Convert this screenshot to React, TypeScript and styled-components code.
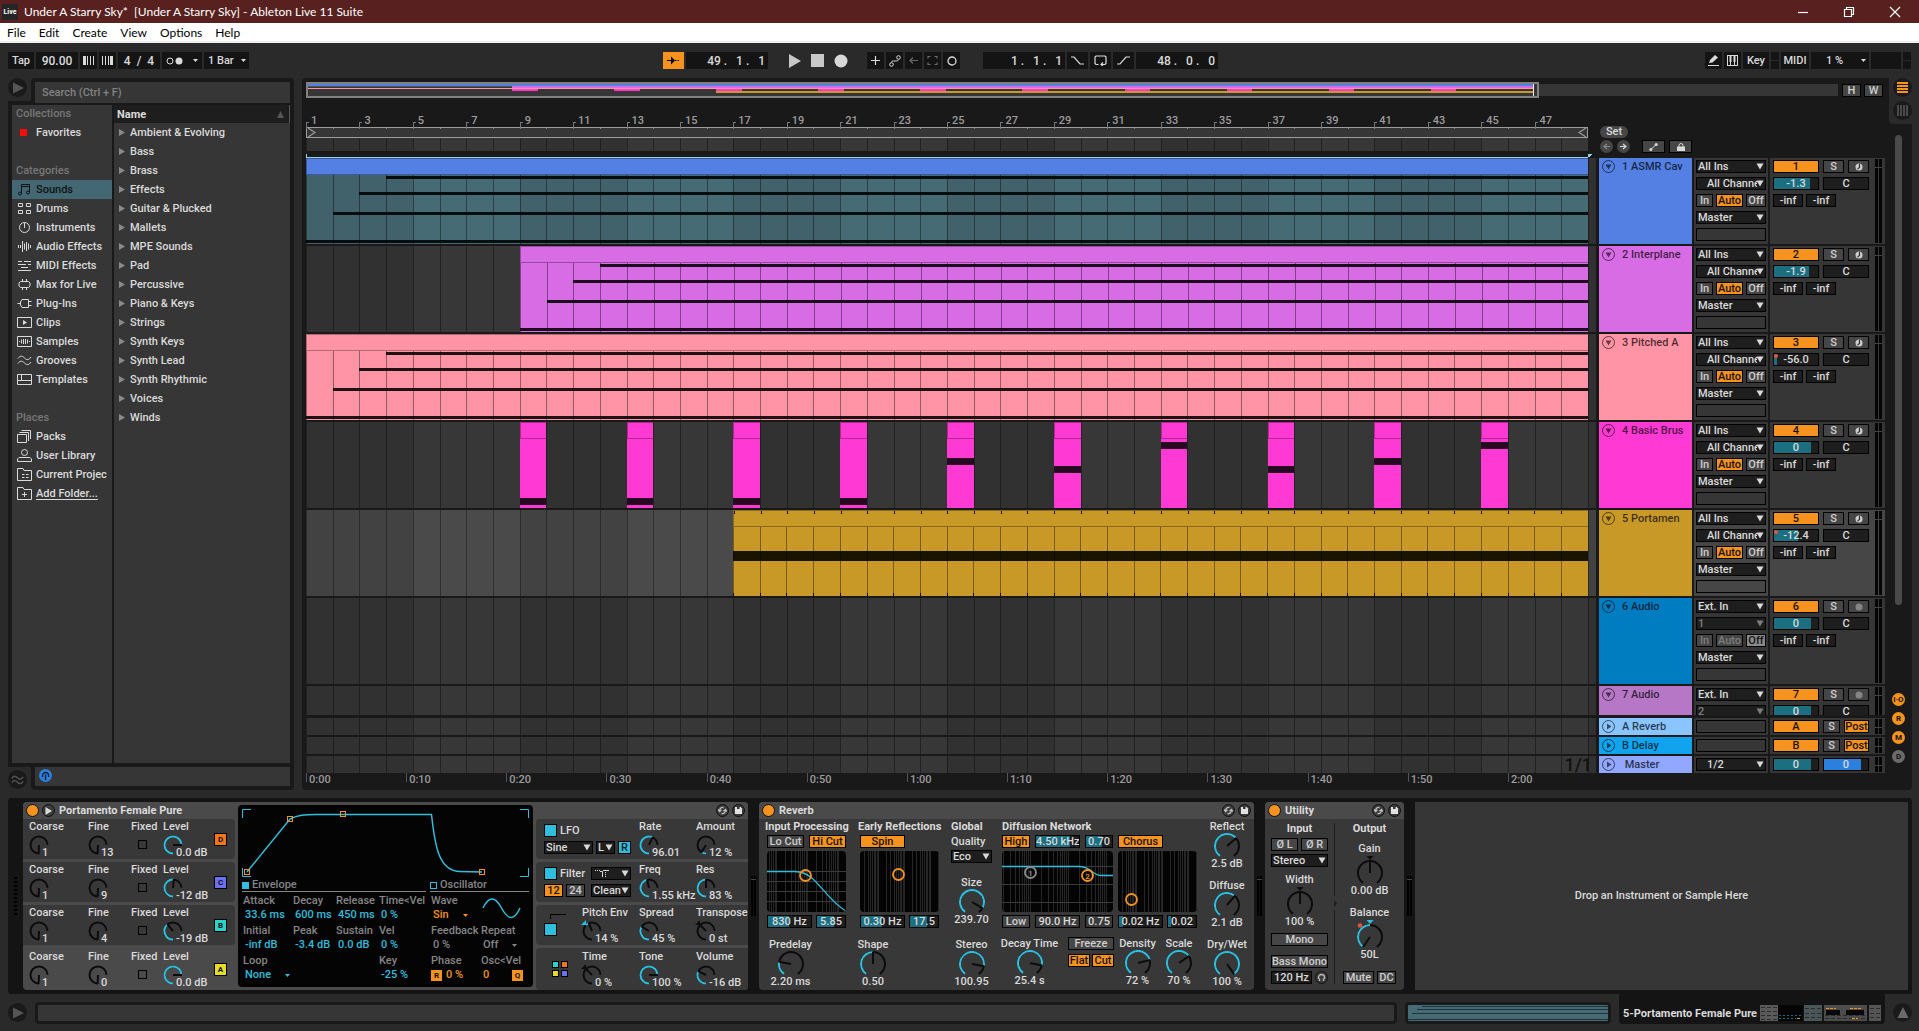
import React from "react";
import styled, { createGlobalStyle, css } from "styled-components";

const c = {
  page: "#2a2a2a",
  panel: "#191919",
  deep: "#141414",
  surface: "#363636",
  raised: "#4a4a4a",
  text: "#dadada",
  dim: "#7d7d7d",
  orange: "#f5931e",
  cyan: "#2fbedd",
  teal: "#1b6f80",
};

const Global = createGlobalStyle`
  * { box-sizing: border-box; }
  body { margin: 0; background: ${c.page}; }
  body, button, input, select {
    font-family: Roboto, "Noto Sans", sans-serif;
    font-size: 11px;
    font-weight: 500;
    color: ${c.text};
  }
  button, select, input { margin: 0; padding: 0; border: 0; border-radius: 0; outline: 0; }
  svg { display: block; flex: none; }
`;

const Window = styled.div`
  display: flex;
  flex-direction: column;
  height: 100vh;
  overflow: hidden;
  white-space: nowrap;
`;

/* ---------- window chrome ---------- */

const TitleBar = styled.header`
  display: flex;
  align-items: center;
  height: 23px;
  padding: 0 18px 0 2px;
  gap: 6px;
  background: #58201e;
  font: 400 12px/16px Lato, "Open Sans", sans-serif;
  color: #fff;
`;
const AppBadge = styled.span`
  width: 16px;
  height: 16px;
  background: #262626;
  font: 700 7px/16px Roboto, sans-serif;
  text-align: center;
`;
const TitleText = styled.span`
  flex: 1;
  white-space: pre;
`;
const WindowButtons = styled.div`
  display: flex;
  gap: 34px;
`;
const ChromeButton = styled.button`
  width: 12px;
  height: 12px;
  background: none;
`;
const MenuBar = styled.nav`
  display: flex;
  align-items: center;
  height: 20px;
  padding: 1px 0 0 7px;
  gap: 13px;
  background: #fff;
  border-bottom: 2px solid #f0f0f0;
`;
const MenuItem = styled.a`
  font: 400 12px/16px Lato, "Open Sans", sans-serif;
  color: #000;
  text-decoration: none;
`;

/* ---------- shared controls ---------- */

const ControlBar = styled.div`
  display: flex;
  height: 35px;
  padding: 9px 8px 0;
`;
const Cluster = styled.div<{ $gap?: number }>`
  display: flex;
  gap: ${(p) => p.$gap ?? 2}px;
`;
const Spacer = styled.div<{ $grow: number }>`
  flex: ${(p) => p.$grow} 1 0;
`;
const BarButton = styled.button<{ $w: number; $bg?: string }>`
  display: flex;
  align-items: center;
  justify-content: center;
  gap: 2px;
  width: ${(p) => p.$w}px;
  height: 17px;
  background: ${(p) => p.$bg ?? c.deep};
`;
const BarInput = styled.input<{ $w: number; $align?: string }>`
  width: ${(p) => p.$w}px;
  height: 17px;
  padding: 0 3px;
  background: ${c.deep};
  font-size: 12px;
  text-align: ${(p) => p.$align ?? "center"};
  white-space: pre;
`;
const IoLamps = styled.span`
  display: grid;
  grid-template-rows: 8px 8px;
  gap: 1px;
  width: 8px;
  & > i { background: ${c.deep}; }
`;

const boxCss = css`
  height: 13px;
  border: 1px solid #000;
  line-height: 11px;
`;
type Tone = "off" | "on" | "cyan" | "dead" | "held";
const toneBg: Record<Tone, string> = {
  off: "#464646", on: c.orange, cyan: c.cyan, dead: "#464646", held: "#8a8a8a",
};
const toneInk: Record<Tone, string> = {
  off: "#cfcfcf", on: "#1a1206", cyan: "#001a20", dead: "#7d7d7d", held: "#111",
};
const Btn = styled.button<{ $w?: number; $tone?: Tone }>`
  ${boxCss}
  display: flex;
  align-items: center;
  justify-content: center;
  width: ${(p) => (p.$w ? p.$w + "px" : "100%")};
  background: ${(p) => toneBg[p.$tone ?? "off"]};
  color: ${(p) => toneInk[p.$tone ?? "off"]};
  overflow: hidden;
`;
const ValueBox = styled.input<{ $w?: number; $fill?: number; $color?: string; $bg?: string }>`
  ${boxCss}
  width: ${(p) => (p.$w ? p.$w + "px" : "100%")};
  text-align: center;
  background: ${(p) =>
    `linear-gradient(to right, ${p.$color ?? c.teal} ${p.$fill ?? 0}%, ${p.$bg ?? "#1e1e1e"} ${p.$fill ?? 0}%)`};
`;
const SelectWrap = styled.span<{ $w?: number }>`
  display: block;
  position: relative;
  width: ${(p) => (p.$w ? p.$w + "px" : "100%")};
  height: 13px;
  & > svg {
    position: absolute;
    right: 2px;
    top: 3px;
    pointer-events: none;
  }
`;
const SelectBox = styled.select<{ $indent?: number; $dim?: boolean }>`
  ${boxCss}
  display: block;
  appearance: none;
  width: 100%;
  padding-left: ${(p) => p.$indent ?? 1}px;
  padding-right: 8px;
  background: #1e1e1e;
  color: ${(p) => (p.$dim ? c.dim : c.text)};
  overflow: hidden;
`;
const Pick = ({ label, value, w, indent, dim }: { label: string; value: string; w?: number; indent?: number; dim?: boolean }) => (
  <SelectWrap $w={w}>
    <SelectBox aria-label={label} $indent={indent} $dim={dim} defaultValue={value}>
      <option>{value}</option>
    </SelectBox>
    <svg width="8" height="7" viewBox="0 0 8 7">
      <path d="M0.5 0.5H7.5L4 6.5Z" fill={dim ? c.dim : c.text} />
    </svg>
  </SelectWrap>
);
const BarPick = styled.select<{ $w: number; $pad?: number }>`
  appearance: none;
  width: ${(p) => p.$w}px;
  height: 17px;
  padding-left: ${(p) => p.$pad ?? 4}px;
  background: ${c.deep};
`;
const BarPickWrap = styled.span`
  position: relative;
  & > svg { position: absolute; right: 3px; top: 7px; pointer-events: none; }
`;
const SmallCaret = ({ color = c.text }: { color?: string }) => (
  <svg width="5" height="3" viewBox="0 0 5 3"><path d="M0 0H5L2.5 3Z" fill={color} /></svg>
);

/* ---------- layout ---------- */

const Main = styled.main`
  display: flex;
  flex: 1;
  min-height: 0;
  gap: 8px;
  padding: 0 7px 0 8px;
`;
const Browser = styled.aside`
  display: grid;
  grid-template: 27px minmax(0, 1fr) 27px / 23px 263px;
  flex: none;
`;
const Corner = styled.div<{ $foot?: boolean }>`
  border-${(p) => (p.$foot ? "top" : "bottom")}: 4px solid ${c.panel};
  ${(p) => p.$foot && "padding-top: 3px;"}
`;
const RoundButton = styled.button<{ $bg?: string; $s?: number }>`
  display: flex;
  align-items: center;
  justify-content: center;
  flex: none;
  width: ${(p) => p.$s ?? 19}px;
  height: ${(p) => p.$s ?? 19}px;
  border-radius: 50%;
  background: ${(p) => p.$bg ?? "#1a1a1a"};
`;
const SearchArea = styled.div`
  padding: 4px 4px 0;
  background: ${c.panel};
  border-radius: 4px 4px 0 0;
`;
const Search = styled.input`
  display: block;
  width: 100%;
  height: 21px;
  padding-left: 7px;
  background: ${c.surface};
  &::placeholder { color: #828282; opacity: 1; }
`;
const BrowserLists = styled.div`
  grid-column: 1 / 3;
  display: grid;
  grid-template-columns: 100px minmax(0, 1fr);
  gap: 2px;
  padding: 0 4px;
  background: ${c.panel};
`;
const List = styled.div`
  background: ${c.surface};
  overflow: hidden;
`;
const ListHead = styled.div<{ $first?: boolean }>`
  height: ${(p) => (p.$first ? 18 : 19)}px;
  margin-top: ${(p) => (p.$first ? 0 : 19)}px;
  padding-left: 4px;
  line-height: ${(p) => (p.$first ? 18 : 20)}px;
  color: #767676;
`;
const ListItem = styled.a<{ $on?: boolean; $link?: boolean }>`
  display: flex;
  align-items: center;
  gap: 4px;
  height: 19px;
  padding-left: 5px;
  color: ${(p) => (p.$on ? "#0c1416" : c.text)};
  text-decoration: ${(p) => (p.$link ? "underline" : "none")};
  text-underline-offset: 2px;
  background: ${(p) => (p.$on ? "#446873" : "none")};
`;
const NameHead = styled.div`
  display: flex;
  align-items: center;
  justify-content: space-between;
  height: 18px;
  padding: 0 5px 0 3px;
  background: #1e1e1e;
  border-right: 1px solid #555;
  font-weight: 700;
`;
const FolderRow = styled.a`
  display: flex;
  align-items: center;
  gap: 5px;
  height: 19px;
  padding-left: 5px;
  color: ${c.text};
  text-decoration: none;
`;
const InfoArea = styled.div`
  padding: 4px;
  background: ${c.panel};
  border-radius: 0 0 4px 4px;
  & > div { height: 19px; padding: 2px 4px; background: ${c.surface}; }
`;

const Arrangement = styled.section`
  display: flex;
  flex: 1;
  min-width: 0;
  background: ${c.panel};
  border-radius: 4px;
`;
const ArrBody = styled.div`
  display: flex;
  flex-direction: column;
  flex: 1;
  min-width: 0;
  padding: 4px 4px 0;
`;
const ArrSide = styled.div`
  display: flex;
  flex-direction: column;
  width: 23px;
`;
const ModeNotch = styled.div`
  display: flex;
  flex-direction: column;
  gap: 4px;
  height: 46px;
  padding-left: 4px;
  background: ${c.page};
  border-radius: 0 0 0 4px;
`;
const ScrollThumb = styled.div`
  width: 7px;
  height: 470px;
  margin: 11px 0 0 6px;
  border-radius: 4px;
  background: #4a4a4a;
`;
const SideDots = styled.div`
  display: flex;
  flex-direction: column;
  gap: 6px;
  margin: auto 0 27px 3px;
`;
const DotButton = styled.button<{ $off?: boolean }>`
  width: 13px;
  height: 13px;
  border-radius: 50%;
  background: ${(p) => (p.$off ? "#6a6a6a" : c.orange)};
  color: #111;
  font: 700 8px/13px Roboto, sans-serif;
`;

const OverviewRow = styled.div`
  display: flex;
  align-items: center;
  height: 16px;
  padding-right: 2px;
`;
const OverviewBox = styled.div`
  display: flex;
  flex: 1232 1 0;
  height: 16px;
  border: 2px solid #808080;
  background: ${c.surface};
  & > svg { flex: 1; min-width: 0; border-right: 1px solid #eee; }
  &::after { content: ""; width: 3px; }
`;
const OverviewRest = styled.div`
  flex: 300 1 0;
  height: 12px;
  margin-right: 4px;
  background: ${c.surface};
`;
const RowShell = styled.div<{ $h?: number }>`
  display: grid;
  grid-template-columns: minmax(0, 1fr) 93px 74px 115px;
  column-gap: 2px;
  flex: none;
  ${(p) => p.$h && `height: ${p.$h}px;`}
  & > :first-child { margin-right: 1px; }
`;
const RulerRow = styled.div`
  display: grid;
  grid-template-columns: minmax(0, 1fr) 286px;
  column-gap: 3px;
  height: 60px;
  flex: none;
`;
const Ruler = styled.div`
  display: flex;
  flex-direction: column;
  min-width: 0;
  padding-top: 13px;
`;
const BarNumbers = styled.div`
  display: grid;
  grid-template-columns: repeat(24, minmax(0, 1fr));
  height: 16px;
  margin-right: 8px;
`;
const BarNumber = styled.span`
  position: relative;
  padding-left: 5px;
  line-height: 19px;
  color: #9c9c9c;
  &::before {
    content: "";
    position: absolute;
    left: 0;
    bottom: 1px;
    width: 2px;
    height: 6px;
    border-left: 1px solid #777;
    border-top: 1px solid #777;
  }
  &::after {
    content: "";
    position: absolute;
    left: 50%;
    bottom: 1px;
    width: 1px;
    height: 1px;
    background: #888;
  }
`;
const LoopBar = styled.div`
  display: flex;
  justify-content: space-between;
  height: 11px;
  margin-right: 8px;
  border: 1px solid #9c9c9c;
  background: ${c.surface};
`;
const ScrubStrip = styled.div`
  height: 13px;
  margin-right: 8px;
  background: #373737;
`;
const CueLine = styled.svg`
  width: 100%;
  height: 7px;
`;
const SetTools = styled.div`
  display: flex;
  flex-direction: column;
  align-items: flex-start;
  gap: 2px;
  padding: 28px 0 0 1px;
`;
const SetButton = styled.button`
  width: 28px;
  height: 12px;
  border-radius: 6px;
  background: #464646;
  line-height: 12px;
`;

const TrackList = styled.div`
  display: flex;
  flex-direction: column;
  gap: 2px;
  flex: 1;
  min-height: 0;
  overflow: hidden;
`;
const Returns = styled.div`
  display: flex;
  flex-direction: column;
  gap: 2px;
  flex: none;
  padding-top: 3px;
`;
const Lane = styled.div<{ $sel?: boolean }>`
  position: relative;
  display: grid;
  grid-template-columns: repeat(48, minmax(0, 1fr)) 8px;
  min-width: 0;
  background: ${(p) => (p.$sel ? "#4a4a4a" : "#373737")};
`;
const LaneLines = styled.svg`
  position: absolute;
  inset: 0 8px 0 0;
  width: calc(100% - 8px);
  height: 100%;
`;
const LaneTail = styled.i`
  grid-column: 49;
  grid-row: 1;
  background: rgba(0, 0, 0, 0.1);
  border-left: 1px solid rgba(0, 0, 0, 0.35);
`;
const Clip = styled.div<{ $from: number; $to: number; $color: string }>`
  position: relative;
  grid-column: ${(p) => p.$from} / ${(p) => p.$to};
  grid-row: 1;
  display: flex;
  flex-direction: column;
  min-width: 0;
  background: ${(p) => p.$color};
`;
const ClipTitle = styled.div<{ $color: string }>`
  height: 17px;
  border: 1px solid rgba(0, 0, 0, 0.3);
  border-right: 0;
  background: ${(p) => p.$color};
`;
const ClipBody = styled.svg`
  width: 100%;
  height: 69px;
`;
const TitleTicks = styled.svg`
  width: 100%;
  height: 3px;
`;
const GridLabel = styled.span`
  position: absolute;
  right: 4px;
  bottom: -1px;
  color: #111;
  font-size: 18px;
  line-height: 18px;
`;
const TrackHead = styled.div<{ $color: string }>`
  display: flex;
  gap: 7px;
  padding: 2px 3px;
  background: ${(p) => p.$color};
  color: rgba(0, 0, 0, 0.72);
  line-height: 13px;
  overflow: hidden;
`;
const IoCol = styled.div<{ $sel?: boolean }>`
  display: flex;
  flex-direction: column;
  gap: 4px;
  padding: 2px;
  background: ${(p) => (p.$sel ? "#464646" : c.surface)};
  overflow: hidden;
`;
const BlankSlot = styled.div`
  flex: none;
  height: 13px;
  border: 1px solid #000;
`;
const MixCol = styled.div<{ $sel?: boolean }>`
  display: flex;
  justify-content: space-between;
  padding: 0 3px;
  background: ${(p) => (p.$sel ? "#464646" : c.surface)};
  overflow: hidden;
`;
const MixRows = styled.div`
  display: flex;
  flex-direction: column;
  gap: 4px;
  padding-top: 2px;
`;
const Meter = styled.i`
  flex: none;
  align-self: stretch;
  width: 7px;
  margin: 1px 0;
  background:
    linear-gradient(#444, #444) 0 8px / 100% 1px no-repeat,
    linear-gradient(to right, #050505 3px, transparent 3px, transparent 4px, #050505 4px);
`;
const Clipped = styled.span`
  position: relative;
  display: flex;
  &::before {
    content: "";
    position: absolute;
    z-index: 1;
    left: 1px;
    top: 1px;
    width: 4px;
    height: 4px;
    border-radius: 50%;
    background: #e5533c;
  }
`;
const TimeRow = styled.div`
  display: flex;
  height: 17px;
  margin-right: 297px;
  flex: none;
`;
const TimeMark = styled.span`
  flex: none;
  width: 7.8125%;
  padding-left: 2px;
  border-left: 1px solid #555;
  height: 9px;
  line-height: 14px;
  color: #9c9c9c;
`;

/* ---------- arrangement drawing ---------- */

const bars = (n: number) => Array.from({ length: n }, (_, i) => i);

const Grid = () => (
  <LaneLines shapeRendering="crispEdges">
    {bars(6).map((i) => (
      <rect key={"s" + i} x={`${(i * 8 * 100) / 48}%`} width={`${400 / 48}%`} height="100%" fill="rgba(0,0,0,.1)" />
    ))}
    {bars(48).map((i) => (
      <rect key={i} x={`${(i * 100) / 48}%`} width="1" height="100%" fill="rgba(0,0,0,.35)" />
    ))}
  </LaneLines>
);

const ScrubLines = styled.svg`
  display: block;
  width: 100%;
  height: 13px;
`;

type Note = { at: number; y: number; h: number };
const LongClip = ({ from, color, body, notes, shaded, ticks }: { from: number; color: string; body?: string; notes: Note[]; shaded?: boolean; ticks?: boolean }) => {
  const len = 49 - from;
  return (
    <Clip $from={from} $to={49} $color={body ?? color}>
      <ClipTitle $color={color}>
        {ticks && (
          <TitleTicks shapeRendering="crispEdges">
            {bars(len).map((i) => <rect key={i} x={`${(i * 100) / len}%`} width="1" height="3" fill="#000" />)}
          </TitleTicks>
        )}
      </ClipTitle>
      <ClipBody shapeRendering="crispEdges">
        {shaded && bars(6).map((i) => (
          <rect key={"s" + i} x={`${(i * 800) / 48}%`} width={`${400 / 48}%`} height="100%" fill="rgba(0,0,0,.08)" />
        ))}
        {bars(len).map((i) => (
          <rect key={i} x={`${(i * 100) / len}%`} width="1" height="100%" fill="rgba(0,0,0,.4)" />
        ))}
        {notes.map((n) => (
          <rect key={n.y} x={`${(n.at * 100) / len}%`} y={n.y - 17} width="100%" height={n.h} fill="rgba(0,0,0,.88)" />
        ))}
        {ticks && bars(len).map((i) => (
          <rect key={"t" + i} x={`${(i * 100) / len}%`} y="66" width="1" height="3" fill="#000" />
        ))}
      </ClipBody>
    </Clip>
  );
};
const chord: Note[] = [
  { at: 3, y: 18, h: 3 }, { at: 2, y: 34, h: 3 }, { at: 1, y: 54, h: 3 }, { at: 0, y: 82, h: 3 },
];
const hits = [[9, 76], [13, 76], [17, 76], [21, 76], [25, 36], [29, 44], [33, 20], [37, 44], [41, 36], [45, 20]];

const Fold = ({ closed }: { closed?: boolean }) => (
  <svg width="13" height="13" viewBox="0 0 13 13">
    <circle cx="6.5" cy="6.5" r="6" fill="none" stroke="rgba(0,0,0,.6)" />
    <path d={closed ? "M5 3.5V9.5L9.5 6.5Z" : "M3.5 4.5H9.5L6.5 9.5Z"} fill="rgba(0,0,0,.6)" />
  </svg>
);
const ArmMidi = () => (
  <svg width="8" height="8" viewBox="0 0 8 8">
    <circle cx="4" cy="4" r="3.5" fill="#cfcfcf" />
    <path d="M4.5 1V4.5L2.5 6" stroke="#333" strokeWidth="1.2" fill="none" />
  </svg>
);
const ArmAudio = () => (
  <svg width="8" height="8" viewBox="0 0 8 8"><circle cx="4" cy="4" r="3.5" fill="#858585" /></svg>
);

type Track = { n: number; name: string; color: string; vol: string; fill: number; audio?: boolean; red?: boolean; sel?: boolean; short?: boolean };
const tracks: Track[] = [
  { n: 1, name: "1 ASMR Cav", color: "#5380e2", vol: "-1.3", fill: 82 },
  { n: 2, name: "2 Interplane", color: "#d86ce4", vol: "-1.9", fill: 80 },
  { n: 3, name: "3 Pitched A", color: "#ff94a6", vol: "-56.0", fill: 6, red: true },
  { n: 4, name: "4 Basic Brus", color: "#ff39d4", vol: "0", fill: 84 },
  { n: 5, name: "5 Portamen", color: "#c99927", vol: "-12.4", fill: 54, red: true, sel: true },
  { n: 6, name: "6 Audio", color: "#007dc1", vol: "0", fill: 84, audio: true },
  { n: 7, name: "7 Audio", color: "#b677c6", vol: "0", fill: 84, audio: true, short: true },
];

const TrackClips = ({ t }: { t: Track }) => {
  if (t.n === 1) return <LongClip from={1} color={t.color} body="#476b75" notes={chord} shaded />;
  if (t.n === 2) return <LongClip from={9} color={t.color} notes={chord} />;
  if (t.n === 3) return <LongClip from={1} color={t.color} notes={chord} />;
  if (t.n === 4)
    return (
      <>
        {hits.map(([at, y]) => (
          <Clip key={at} $from={at} $to={at + 1} $color={t.color}>
            <ClipTitle $color={t.color} />
            <ClipBody shapeRendering="crispEdges">
              <rect y={y - 17} width="100%" height="7" fill="rgba(0,0,0,.85)" />
            </ClipBody>
          </Clip>
        ))}
      </>
    );
  if (t.n === 5) return <LongClip from={17} color={t.color} notes={[{ at: 0, y: 41, h: 10 }]} ticks />;
  return null;
};

const TrackRow = ({ t }: { t: Track }) => (
  <RowShell $h={86}>
    <Lane $sel={t.sel}>
      <Grid />
      <LaneTail />
      <TrackClips t={t} />
    </Lane>
    <TrackHead $color={t.color}><Fold />{t.name}</TrackHead>
    <IoCol $sel={t.sel}>
      <Pick label={t.name + " input"} value={t.audio ? "Ext. In" : "All Ins"} />
      <Pick label={t.name + " channel"} value={t.audio ? String(t.n - 5) : "All Channels"} indent={t.audio ? 1 : 10} dim={t.audio} />
      {!t.short && (
        <>
          <Cluster $gap={3}>
            <Btn $w={17} $tone={t.audio ? "dead" : "off"}>In</Btn>
            <Btn $w={27} $tone={t.audio ? "dead" : "on"}>Auto</Btn>
            <Btn $w={20} $tone={t.audio ? "held" : "off"}>Off</Btn>
          </Cluster>
          <Pick label={t.name + " output"} value="Master" />
          <BlankSlot />
        </>
      )}
    </IoCol>
    <MixCol $sel={t.sel}>
      <MixRows>
        <Cluster $gap={4}>
          <Btn $w={46} $tone="on">{t.n}</Btn>
          <Btn $w={21}>S</Btn>
          <Btn $w={21} aria-label={"Arm " + t.name}>{t.audio ? <ArmAudio /> : <ArmMidi />}</Btn>
        </Cluster>
        <Cluster $gap={4}>
          {t.red
            ? <Clipped><ValueBox aria-label={t.name + " volume"} $w={46} $fill={t.fill} defaultValue={t.vol} /></Clipped>
            : <ValueBox aria-label={t.name + " volume"} $w={46} $fill={t.fill} defaultValue={t.vol} />}
          <ValueBox aria-label={t.name + " pan"} $w={46} defaultValue="C" />
        </Cluster>
        {!t.short && (
          <Cluster $gap={3}>
            <ValueBox aria-label={t.name + " send A"} $w={30} defaultValue="-inf" />
            <ValueBox aria-label={t.name + " send B"} $w={30} defaultValue="-inf" />
          </Cluster>
        )}
      </MixRows>
      <Meter />
    </MixCol>
  </RowShell>
);

const ReturnRow = ({ id, name, color }: { id: string; name: string; color: string }) => (
  <RowShell $h={17}>
    <Lane><Grid /><LaneTail /></Lane>
    <TrackHead $color={color}><Fold closed />{name}</TrackHead>
    <IoCol><BlankSlot /></IoCol>
    <MixCol>
      <MixRows>
        <Cluster $gap={4}>
          <Btn $w={46} $tone="on">{id}</Btn>
          <Btn $w={17}>S</Btn>
          <Btn $w={25} $tone="on">Post</Btn>
        </Cluster>
      </MixRows>
      <Meter />
    </MixCol>
  </RowShell>
);

const OverviewSvg = () => (
  <svg height="12" width="100%" viewBox="0 0 48 12" preserveAspectRatio="none" shapeRendering="crispEdges">
    <rect width="48" height="2" fill="#5380e2" />
    <rect y="2" width="8" height="1" fill="#555" />
    <rect x="8" y="2" width="40" height="2" fill="#d86ce4" />
    <rect y="4" width="48" height="1" fill="#ff94a6" />
    {hits.map(([at]) => <rect key={at} x={at - 1} y="5" width="1" height="2" fill="#ff39d4" />)}
    <rect x="16" y="7" width="32" height="2" fill="#c99927" />
  </svg>
);

/* ---------- browser data ---------- */

const iconPaths: Record<string, React.ReactNode> = {
  Sounds: <><path d="M4.5 10.5V1.5H12.5V9.5M4.5 3.5H12.5" /><circle cx="3" cy="10.5" r="1.5" /><circle cx="11" cy="9.5" r="1.5" /></>,
  Drums: <path d="M1.5 1.5H5.5V4.5H1.5ZM9.5 1.5H13.5V4.5H9.5ZM1.5 8.5H5.5V11.5H1.5ZM9.5 8.5H13.5V11.5H9.5Z" />,
  Instruments: <><circle cx="7.5" cy="6.5" r="5" /><path d="M7.5 1.5V7" /></>,
  "Audio Effects": <path d="M1.5 5V8M3.5 5V8M5.5 1V12M7.5 3.5V9.5M9.5 2V11M11.5 3.5V9.5M13.5 5V8" />,
  "MIDI Effects": <path d="M1 2.5H5M7 2.5H14M1 5.5H9M4 8.5H11M1 11.5H14M11 5.5H14" />,
  "Max for Live": <path d="M3.5 3.5H11.5L13 5V8L11.5 9.5H3.5L2 8V5ZM5.5 1V3.5M9.5 1V3.5M5.5 9.5V12M9.5 9.5V12" />,
  "Plug-Ins": <path d="M0.5 6.5H3.5M3.5 5L5 2.5H11.5V10.5H5L3.5 8ZM11.5 4.5H14.5M11.5 8.5H14.5" />,
  Clips: <><path d="M0.5 1.5H14.5V11.5H0.5Z" /><path d="M6 4V9L10 6.5Z" fill="currentColor" stroke="none" /></>,
  Samples: <path d="M0.5 1.5H14.5V11.5H0.5ZM2.5 6V7M4.5 4.5V8.5M6.5 4V9M8.5 4V9M10.5 4.5V8.5M12.5 6V7" />,
  Grooves: <path d="M1 4.5C3 1.5 5 1.5 7.5 4S12 6 14 3M1 9.5C3 6.5 5 6.5 7.5 9S12 11 14 8" />,
  Templates: <path d="M0.5 1.5H14.5V11.5H0.5ZM0.5 7.5H14.5M4.5 1.5V7.5" />,
  Packs: <path d="M0.5 4.5H9.5V12.5H0.5ZM2.5 2.5H11.5V11M4.5 0.5H13.5V9" />,
  "User Library": <><circle cx="7.5" cy="3.5" r="3" /><path d="M0.5 12.5V10L2 8.5H13L14.5 10V12.5Z" /></>,
  "Current Projec": <path d="M0.5 12.5V0.5H6L7 2.5H14.5V12.5ZM5 6.5H7.5M9 6.5H11.5M5 9.5H7.5M9 9.5H11.5" />,
  "Add Folder...": <path d="M0.5 12.5V0.5H6L7 2.5H14.5V12.5ZM5 7.5H10M7.5 5V10" />,
};
const BrowserIcon = ({ name }: { name: string }) =>
  name === "Favorites" ? (
    <svg width="15" height="13"><rect x="3" y="3" width="7" height="7" fill="#ff0a0a" /></svg>
  ) : (
    <svg width="15" height="13" viewBox="0 0 15 13" fill="none" stroke="currentColor">{iconPaths[name]}</svg>
  );
const categories = ["Sounds", "Drums", "Instruments", "Audio Effects", "MIDI Effects", "Max for Live", "Plug-Ins", "Clips", "Samples", "Grooves", "Templates"];
const places = ["Packs", "User Library", "Current Projec", "Add Folder..."];
const folders = ["Ambient & Evolving", "Bass", "Brass", "Effects", "Guitar & Plucked", "Mallets", "MPE Sounds", "Pad", "Percussive", "Piano & Keys", "Strings", "Synth Keys", "Synth Lead", "Synth Rhythmic", "Voices", "Winds"];
const PlayMark = ({ color = "#555" }: { color?: string }) => (
  <svg width="12" height="12" viewBox="0 0 12 12"><path d="M1 0.5V11.5L12 6Z" fill={color} /></svg>
);
const Waves = ({ color = "#555" }: { color?: string }) => (
  <svg width="13" height="12" viewBox="0 0 15 13" fill="none" stroke={color} strokeWidth="1.5">{iconPaths.Grooves}</svg>
);

/* ---------- devices ---------- */

const Rack = styled.section`
  display: flex;
  height: 196px;
  margin: 8px 7px 0 8px;
  padding: 4px;
  background: ${c.deep};
  border-radius: 4px 4px 0 4px;
  flex: none;
`;
const RackGrip = styled.i`
  width: 3px;
  height: 40px;
  margin: 75px 6px 0 2px;
  background: repeating-linear-gradient(#000 0 2px, transparent 2px 4px);
`;
const RackMeter = styled.i`
  flex: none;
  width: 5px;
  height: 40px;
  margin: 74px 3px 0;
  background:
    linear-gradient(#444, #444) 0 3px / 100% 1px no-repeat,
    linear-gradient(to right, #000 2px, transparent 2px, transparent 3px, #000 3px);
`;
const Device = styled.article<{ $w: number }>`
  display: flex;
  flex-direction: column;
  flex: none;
  width: ${(p) => p.$w}px;
  background: #383838;
  border-radius: 4px;
  overflow: hidden;
`;
const DeviceHead = styled.div`
  display: flex;
  align-items: center;
  gap: 3px;
  flex: none;
  height: 17px;
  padding: 0 3px;
  background: ${c.raised};
  font-weight: 700;
  & > span { flex: 1; padding-left: 1px; }
`;
const OnSwitch = styled.button`
  width: 13px;
  height: 13px;
  border: 1px solid #111;
  border-radius: 50%;
  background: ${c.orange};
`;
const HeadIcon = styled.button`
  display: flex;
  align-items: center;
  justify-content: center;
  width: 13px;
  height: 13px;
  border: 1px solid #111;
  border-radius: 50%;
  background: #3c3c3c;
`;
const HeadIcons = () => (
  <Cluster $gap={3}>
    <HeadIcon aria-label="Hot-swap preset">
      <svg width="9" height="9" viewBox="0 0 9 9" fill="none" stroke="#bdbdbd" strokeWidth="1.3">
        <path d="M5.5 1.5C3 1 1.5 3 1.5 5M0 3.5L1.5 5.5L3.5 4M3.5 7.5C6 8 7.5 6 7.5 4M9 5.5L7.5 3.5L5.5 5" />
      </svg>
    </HeadIcon>
    <HeadIcon aria-label="Save preset">
      <svg width="9" height="9" viewBox="0 0 9 9">
        <path d="M1 1H6.5L8 2.5V8H1Z" fill="#e2e2e2" /><rect x="3" y="1" width="2.5" height="2" fill="#333" />
      </svg>
    </HeadIcon>
  </Cluster>
);

const polar = (cx: number, cy: number, r: number, a: number) => {
  const t = (a * Math.PI) / 180;
  return `${(cx + r * Math.sin(t)).toFixed(2)} ${(cy - r * Math.cos(t)).toFixed(2)}`;
};
const arc = (cx: number, cy: number, r: number, a: number, b: number) =>
  `M${polar(cx, cy, r, a)}A${r} ${r} 0 ${b - a > 180 ? 1 : 0} 1 ${polar(cx, cy, r, b)}`;

type KnobProps = { label: string; value: string; v: number; from?: number; mark?: string };

const SmallKnobCell = styled.div`
  display: flex;
  flex-direction: column;
  line-height: 13px;
`;
const KnobStack = styled.div`
  display: grid;
  height: 26px;
  & > * { grid-area: 1 / 1; }
  & > svg { margin-top: 2px; overflow: visible; }
  & > output { align-self: end; padding-left: 13px; }
`;
const SmallKnob = ({ label, value, v, from = 0, mark }: KnobProps) => {
  const at = 180 + 270 * v;
  const origin = 180 + 270 * from;
  return (
    <SmallKnobCell>
      <span>{label}</span>
      <KnobStack>
        <svg width="20" height="20" viewBox="0 0 20 20" fill="none" strokeWidth="2">
          <path d={arc(10, 10, 8.5, 180, 449)} stroke="#0c0c0c" />
          {Math.abs(at - origin) > 3 && <path d={arc(10, 10, 8.5, Math.min(at, origin), Math.max(at, origin))} stroke={c.cyan} />}
          <path d={`M10 10L${polar(10, 10, 9, at)}`} stroke="#0c0c0c" />
          {mark && <path d="M4 -1V4H-1Z" fill={mark} />}
        </svg>
        <output>{value}</output>
      </KnobStack>
    </SmallKnobCell>
  );
};

const BigKnobCell = styled.div<{ $w?: number }>`
  display: flex;
  flex-direction: column;
  align-items: center;
  width: ${(p) => (p.$w ? p.$w + "px" : "auto")};
  line-height: 13px;
`;
const BigKnob = ({ label, value, v, from = 0, mark, w }: KnobProps & { w?: number }) => {
  const at = 215 + 290 * v;
  const origin = 215 + 290 * from;
  const top = mark ? 5 : 0;
  return (
    <BigKnobCell $w={w}>
      <span>{label}</span>
      <svg width="28" height={24 + top} viewBox={`-1 ${-top} 28 ${24 + top}`} fill="none" strokeWidth="2">
        <path d={arc(13, 13, 12, 215, 505)} stroke="#0c0c0c" />
        {Math.abs(at - origin) > 3 && <path d={arc(13, 13, 12, Math.min(at, origin), Math.max(at, origin))} stroke={c.cyan} />}
        <path d={`M13 13L${polar(13, 13, 12.5, at)}`} stroke="#0c0c0c" />
        {mark && <path d="M9.5 -4H16.5L13 0Z" fill={mark} />}
        {mark === c.cyan && <circle cx="3" cy="1.5" r="2.3" fill="#e5533c" />}
      </svg>
      <output>{value}</output>
    </BigKnobCell>
  );
};

const Operator = styled.article`
  display: flex;
  flex: none;
  width: 725px;
  background: ${c.raised};
  border-radius: 4px;
  overflow: hidden;
`;
const OpSide = styled.div`
  display: flex;
  flex-direction: column;
  width: 212px;
`;
const OpRows = styled.div`
  display: flex;
  flex-direction: column;
  gap: 3px;
`;
const OscRow = styled.div<{ $on?: boolean }>`
  display: grid;
  grid-template-columns: 59px 43px 32px 51px 13px;
  height: ${(p) => (p.$on ? 42 : 40)}px;
  padding: ${(p) => (p.$on ? 2 : 1)}px 0 0 6px;
  background: ${(p) => (p.$on ? "none" : "#383838")};
  border-radius: 0 4px 4px 0;
`;
const FixedCell = styled.label`
  display: flex;
  flex-direction: column;
  gap: 7px;
  line-height: 13px;
`;
const Tick = styled.input<{ $s?: number; $bg?: string }>`
  appearance: none;
  flex: none;
  width: ${(p) => p.$s ?? 13}px;
  height: ${(p) => p.$s ?? 13}px;
  border: 1px solid #000;
  background: ${(p) => p.$bg ?? "transparent"};
`;
const FixedTick = styled(Tick)`
  margin-left: 7px;
  width: 9px;
  height: 9px;
`;
const OscBadge = styled.button<{ $bg: string }>`
  width: 13px;
  height: 13px;
  margin-top: 13px;
  border: 1px solid #000;
  background: ${(p) => p.$bg};
  color: #111;
  font: 700 8px/11px Roboto, sans-serif;
`;
const Screen = styled.div`
  display: flex;
  flex-direction: column;
  width: 295px;
  margin: 3px;
  background: #040404;
  border-radius: 4px;
  color: #858585;
`;
const ScreenTabs = styled.div`
  display: grid;
  grid-template-columns: 184px 99px;
  column-gap: 4px;
  padding: 0 4px;
  height: 13px;
`;
const ScreenTab = styled.label`
  display: flex;
  align-items: center;
  gap: 3px;
  line-height: 12px;
  border-bottom: 1px solid #858585;
`;
const ScreenTick = styled.input<{ $on?: boolean }>`
  appearance: none;
  width: 7px;
  height: 7px;
  border: 1px solid ${c.cyan};
  background: ${(p) => (p.$on ? c.cyan : "none")};
`;
const ParamGrid = styled.div`
  display: grid;
  grid-template-columns: 50px 43px 43px 52px 50px 42px;
  grid-auto-rows: 30px;
  padding: 2px 0 0 5px;
`;
const Param = styled.div<{ $color?: string; $flush?: boolean }>`
  display: flex;
  flex-direction: column;
  line-height: 14px;
  & > output {
    display: flex;
    align-items: center;
    gap: 4px;
    padding-left: ${(p) => (p.$flush ? 0 : 2)}px;
    color: ${(p) => p.$color ?? c.cyan};
    & > svg { margin-left: 10px; }
  }
`;
const MiniKey = styled.button`
  width: 11px;
  height: 11px;
  background: ${c.orange};
  color: #111;
  font: 700 8px/11px Roboto, sans-serif;
`;
const OpRow = styled.div<{ $cols: string; $last?: boolean }>`
  display: grid;
  grid-template-columns: ${(p) => p.$cols};
  height: ${(p) => (p.$last ? 42 : 40)}px;
  padding: ${(p) => (p.$last ? 2 : 1)}px 0 0 8px;
  background: #383838;
  border-radius: 4px 0 0 4px;
`;
const OpControls = styled.div`
  display: flex;
  flex-direction: column;
  gap: 4px;
  padding-top: 4px;
`;
const OpLine = styled.div`
  display: flex;
  align-items: center;
  gap: 3px;
  line-height: 13px;
`;
const FilterLine = styled(OpLine)`
  justify-content: space-between;
  padding-right: 8px;
`;
const Fill = styled.span`
  flex: 1;
`;
const ShapePick = styled.div`
  position: relative;
  width: 40px;
  & > svg { position: absolute; left: 4px; top: 3px; pointer-events: none; }
`;

const oscRows = [
  { id: "D", bg: "#f4761c", fine: "13", level: "0.0 dB", v: 1 },
  { id: "C", bg: "#6a72f4", fine: "9", level: "-12 dB", v: 0.685 },
  { id: "B", bg: "#2bd4cb", fine: "4", level: "-19 dB", v: 0.52 },
  { id: "A", bg: "#e6dc28", fine: "0", level: "0.0 dB", v: 1 },
];

const Handle = ({ x, y }: { x: number; y: number }) => (
  <rect x={x - 2.5} y={y - 2.5} width="5" height="5" fill="none" stroke={c.orange} />
);

const OperatorDevice = () => (
  <Operator>
    <OpSide>
      <DeviceHead>
        <OnSwitch aria-label="Device on" />
        <HeadIcon aria-label="Show chain"><svg width="7" height="8" viewBox="0 0 7 8"><path d="M0.5 0V8L7 4Z" fill="#dadada" /></svg></HeadIcon>
        <span>Portamento Female Pure</span>
      </DeviceHead>
      <OpRows>
        {oscRows.map((o) => (
          <OscRow key={o.id} $on={o.id === "A"}>
            <SmallKnob label="Coarse" value="1" v={0.01} />
            <SmallKnob label="Fine" value={o.fine} v={0.01} />
            <FixedCell>Fixed<FixedTick type="checkbox" /></FixedCell>
            <SmallKnob label="Level" value={o.level} v={o.v} />
            <OscBadge $bg={o.bg}>{o.id}</OscBadge>
          </OscRow>
        ))}
      </OpRows>
    </OpSide>
    <Screen>
      <svg width="295" height="74" viewBox="0 0 295 74" fill="none" stroke={c.cyan}>
        <path d="M4.5 13V4.5H13M4.5 63V71.5H13M282 4.5H290.5V13M282 71.5H290.5V63" />
        <path d="M9 67L52 14C60 10 66 9.5 78 9.5H193.5C197 42 201 66 222 66.5L244 67" strokeWidth="1.5" />
        <Handle x={9} y={67} /><Handle x={52} y={14} /><Handle x={105} y={9} /><Handle x={244} y={67} />
      </svg>
      <ScreenTabs>
        <ScreenTab><ScreenTick type="checkbox" $on />Envelope</ScreenTab>
        <ScreenTab><ScreenTick type="checkbox" />Oscillator</ScreenTab>
      </ScreenTabs>
      <ParamGrid>
        <Param>Attack<output>33.6 ms</output></Param>
        <Param>Decay<output>600 ms</output></Param>
        <Param>Release<output>450 ms</output></Param>
        <Param>Time&lt;Vel<output>0 %</output></Param>
        <Param $color={c.orange}>Wave<output>Sin <SmallCaret color={c.orange} /></output></Param>
        <svg width="42" height="28" viewBox="0 0 42 28" fill="none" stroke={c.cyan} strokeWidth="1.5">
          <path d="M2 14C8 2 14 2 20.5 14S33 27 39 14" />
        </svg>
        <Param>Initial<output>-inf dB</output></Param>
        <Param>Peak<output>-3.4 dB</output></Param>
        <Param>Sustain<output>0.0 dB</output></Param>
        <Param>Vel<output>0 %</output></Param>
        <Param $color="#858585">Feedback<output>0 %</output></Param>
        <Param $color="#858585">Repeat<output>Off <SmallCaret color="#858585" /></output></Param>
        <Param>Loop<output>None <SmallCaret color={c.cyan} /></output></Param>
        <Fill /><Fill />
        <Param>Key<output>-25 %</output></Param>
        <Param $color={c.orange} $flush>Phase<output><MiniKey>R</MiniKey>0 %</output></Param>
        <Param $color={c.orange}>Osc&lt;Vel<output>0<Fill /><MiniKey>Q</MiniKey></output></Param>
      </ParamGrid>
    </Screen>
    <OpSide>
      <DeviceHead><span /><HeadIcons /></DeviceHead>
      <OpRows>
        <OpRow $cols="95px 57px 1fr">
          <OpControls>
            <OpLine as="label"><Tick type="checkbox" $bg={c.cyan} />LFO</OpLine>
            <OpLine><Pick label="LFO shape" value="Sine" w={49} /><Pick label="LFO range" value="L" w={19} /><Btn $w={13} $tone="cyan">R</Btn></OpLine>
          </OpControls>
          <SmallKnob label="Rate" value="96.01" v={0.76} />
          <SmallKnob label="Amount" value="12 %" v={0.12} />
        </OpRow>
        <OpRow $cols="95px 57px 1fr">
          <OpControls>
            <FilterLine>
              <OpLine as="label"><Tick type="checkbox" $bg={c.cyan} />Filter</OpLine>
              <ShapePick>
                <Pick label="Filter shape" value=" " w={40} />
                <svg width="14" height="8" viewBox="0 0 14 8" fill="none" stroke={c.text}><path d="M0 0.5H5" strokeDasharray="1 1" /><path d="M5 1.5H7.5V7M8 0.5H14" /><path d="M10.5 2V7" strokeDasharray="1 1" /></svg>
              </ShapePick>
            </FilterLine>
            <FilterLine>
              <OpLine><Btn $w={19} $tone="on">12</Btn><Btn $w={19}>24</Btn></OpLine>
              <Pick label="Filter circuit" value="Clean" w={40} />
            </FilterLine>
          </OpControls>
          <SmallKnob label="Freq" value="1.55 kHz" v={0.62} />
          <SmallKnob label="Res" value="83 %" v={0.67} />
        </OpRow>
        <OpRow $cols="38px 57px 57px 1fr">
          <OpControls>
            <svg width="22" height="9" viewBox="0 0 22 9" fill="none" stroke="#000"><path d="M6.5 9V4.5H22" /></svg>
            <Tick type="checkbox" aria-label="Pitch envelope on" $bg={c.cyan} />
          </OpControls>
          <SmallKnob label="Pitch Env" value="14 %" v={0.585} from={0.5} mark={c.cyan} />
          <SmallKnob label="Spread" value="45 %" v={0.45} />
          <SmallKnob label="Transpose" value="0 st" v={0.5} from={0.5} mark="#0c0c0c" />
        </OpRow>
        <OpRow $cols="38px 57px 57px 1fr" $last>
          <svg width="26" height="30" viewBox="0 0 26 30" stroke="#000">
            <rect x="8.5" y="11.5" width="6" height="6" fill="#2bd4cb" /><rect x="17.5" y="11.5" width="6" height="6" fill="#f4761c" />
            <rect x="8.5" y="20.5" width="6" height="6" fill="#e6dc28" /><rect x="17.5" y="20.5" width="6" height="6" fill="#6a72f4" />
          </svg>
          <SmallKnob label="Time" value="0 %" v={0.5} from={0.5} mark="#0c0c0c" />
          <SmallKnob label="Tone" value="100 %" v={1} />
          <SmallKnob label="Volume" value="-16 dB" v={0.43} />
        </OpRow>
      </OpRows>
    </OpSide>
  </Operator>
);

const Stack = styled.div<{ $w: number; $mr?: number; $align?: string }>`
  display: flex;
  flex-direction: column;
  flex: none;
  align-items: ${(p) => p.$align ?? "stretch"};
  width: ${(p) => p.$w}px;
  margin-right: ${(p) => p.$mr ?? 0}px;
`;
const ReverbRow = styled.div`
  display: flex;
  padding: 1px 0 0 8px;
`;
const ZoneLabel = styled.span<{ $shift?: boolean }>`
  height: 13px;
  line-height: 13px;
  font-weight: 700;
  margin: 0 -14px 2px ${(p) => (p.$shift ? 0 : -2)}px;
`;
const BtnRow = styled.div<{ $mt?: number }>`
  display: flex;
  justify-content: space-between;
  margin-top: ${(p) => p.$mt ?? 0}px;
`;
const Graph = styled.svg`
  width: 100%;
  height: 61px;
  margin-top: 3px;
  border-radius: 4px;
  background: #040404;
`;
const KnobRow = styled.div<{ $mt?: number; $gap?: number }>`
  display: flex;
  gap: ${(p) => p.$gap ?? 0}px;
  margin-top: ${(p) => p.$mt ?? 10}px;
`;
const KeyPair = styled.div`
  display: flex;
  flex-direction: column;
  gap: 4px;
  width: 46px;
  margin: 0 -1px 0 auto;
`;
const PlainLabel = styled.span`
  line-height: 13px;
`;

const logLines = (w: number, decade: number, start: number) => {
  const out: number[] = [];
  for (let d = start; d < w; d += decade)
    for (let k = 1; k < 10; k++) {
      const x = Math.round(d + decade * Math.log10(k));
      if (x > 0 && x < w) out.push(x);
    }
  return out;
};
const LogGrid = ({ w, decade, start }: { w: number; decade: number; start: number }) => (
  <g fill="#262626">
    {logLines(w, decade, start).map((x, i) => <rect key={i} x={x} width="1" height="61" />)}
  </g>
);
const HLines = ({ w, ys }: { w: number; ys: number[] }) => (
  <g fill="#3a3a3a">{ys.map((y) => <rect key={y} y={y} width={w} height="1" />)}</g>
);
const Ring = ({ x, y, color = c.orange }: { x: number; y: number; color?: string }) => (
  <circle cx={x} cy={y} r="5.5" fill="none" stroke={color} strokeWidth="1.8" />
);

const ReverbDevice = () => (
  <Device $w={495}>
    <DeviceHead><OnSwitch aria-label="Reverb on" /><span>Reverb</span><HeadIcons /></DeviceHead>
    <ReverbRow>
      <Stack $w={79} $mr={14}>
        <ZoneLabel>Input Processing</ZoneLabel>
        <BtnRow><Btn $w={37}>Lo Cut</Btn><Btn $w={37} $tone="on">Hi Cut</Btn></BtnRow>
        <Graph viewBox="0 0 79 61">
          <LogGrid w={79} decade={31} start={-22} /><HLines w={79} ys={[20, 30, 40, 50]} />
          <path d="M0 20.5H28C50 21 55 45 78 59.5" fill="none" stroke={c.cyan} strokeWidth="1.3" />
          <Ring x={38.5} y={24.5} />
        </Graph>
        <BtnRow $mt={3}><ValueBox aria-label="Input frequency" $w={45} $fill={50} defaultValue="830 Hz" /><ValueBox aria-label="Input width" $w={30} $fill={62} defaultValue="5.85" /></BtnRow>
        <KnobRow><BigKnob w={47} label="Predelay" value="2.20 ms" v={0.224} /></KnobRow>
      </Stack>
      <Stack $w={79} $mr={12}>
        <ZoneLabel>Early Reflections</ZoneLabel>
        <BtnRow><Btn $w={45} $tone="on">Spin</Btn></BtnRow>
        <Graph viewBox="0 0 79 61"><LogGrid w={79} decade={26} start={-8} /><Ring x={38.5} y={23.5} /></Graph>
        <BtnRow $mt={3}><ValueBox aria-label="Spin rate" $w={45} $fill={50} defaultValue="0.30 Hz" /><ValueBox aria-label="Spin amount" $w={30} $fill={62} defaultValue="17.5" /></BtnRow>
        <KnobRow><BigKnob w={26} label="Shape" value="0.50" v={0.5} /></KnobRow>
      </Stack>
      <Stack $w={41} $mr={10}>
        <ZoneLabel $shift>Global</ZoneLabel>
        <PlainLabel>Quality</PlainLabel>
        <BtnRow $mt={2}><Pick label="Quality" value="Eco" w={41} /></BtnRow>
        <KnobRow $mt={13}><BigKnob w={41} label="Size" value="239.70" v={0.914} /></KnobRow>
        <KnobRow $mt={12}><BigKnob w={41} label="Stereo" value="100.95" v={0.845} /></KnobRow>
      </Stack>
      <Stack $w={111} $mr={5}>
        <ZoneLabel $shift>Diffusion Network</ZoneLabel>
        <BtnRow><Btn $w={28} $tone="on">High</Btn><ValueBox aria-label="High frequency" $w={45} $fill={80} defaultValue="4.50 kHz" /><ValueBox aria-label="High amount" $w={28} $fill={62} defaultValue="0.70" /></BtnRow>
        <Graph viewBox="0 0 111 61">
          <LogGrid w={111} decade={38} start={-10} /><HLines w={111} ys={[15, 33, 51]} />
          <path d="M0 15.5H78C90 16 90 24.5 100 24.5H111" fill="none" stroke={c.cyan} strokeWidth="1.3" />
          <Ring x={28.5} y={21.5} color="#8a8a8a" /><Ring x={85.5} y={24.5} />
          <text x="28.5" y="24.5" fontSize="8" textAnchor="middle" fill="#9a9a9a">1</text>
          <text x="85.5" y="27.5" fontSize="8" textAnchor="middle" fill={c.orange}>2</text>
        </Graph>
        <BtnRow $mt={3}><Btn $w={28}>Low</Btn><ValueBox aria-label="Low frequency" $w={45} $bg="#3a3a3a" defaultValue="90.0 Hz" /><ValueBox aria-label="Low amount" $w={28} $bg="#3a3a3a" defaultValue="0.75" /></BtnRow>
        <KnobRow $mt={9}>
          <BigKnob w={55} label="Decay Time" value="25.4 s" v={0.85} />
          <KeyPair><Btn>Freeze</Btn><BtnRow><Btn $w={22} $tone="on">Flat</Btn><Btn $w={22} $tone="on">Cut</Btn></BtnRow></KeyPair>
        </KnobRow>
      </Stack>
      <Stack $w={79} $mr={9}>
        <ZoneLabel />
        <BtnRow><Btn $w={45} $tone="on">Chorus</Btn></BtnRow>
        <Graph viewBox="0 0 79 61"><LogGrid w={79} decade={26} start={-8} /><Ring x={13.5} y={48.5} /></Graph>
        <BtnRow $mt={3}><ValueBox aria-label="Chorus rate" $w={45} $fill={10} defaultValue="0.02 Hz" /><ValueBox aria-label="Chorus amount" $w={30} $fill={10} defaultValue="0.02" /></BtnRow>
        <KnobRow $mt={9} $gap={4}>
          <BigKnob w={39} label="Density" value="72 %" v={0.76} />
          <BigKnob w={36} label="Scale" value="70 %" v={0.69} />
        </KnobRow>
      </Stack>
      <Stack $w={42} $align="center">
        <BigKnob label="Reflect" value="2.5 dB" v={0.67} />
        <KnobRow $mt={9}><BigKnob label="Diffuse" value="2.1 dB" v={0.64} /></KnobRow>
        <KnobRow $mt={9}><BigKnob label="Dry/Wet" value="100 %" v={1} /></KnobRow>
      </Stack>
    </ReverbRow>
  </Device>
);

const UtilityRow = styled.div`
  display: flex;
  padding: 3px 0 0 6px;
`;
const UtilLabel = styled.span`
  font-weight: 700;
  line-height: 13px;
  text-align: center;
`;
const Divider = styled.svg`
  margin: 1px 6px 0 6px;
`;
const UtilityDevice = () => (
  <Device $w={139}>
    <DeviceHead><OnSwitch aria-label="Utility on" /><span>Utility</span><HeadIcons /></DeviceHead>
    <UtilityRow>
      <Stack $w={57}>
        <UtilLabel>Input</UtilLabel>
        <BtnRow $mt={3}><Btn $w={27}>Ø L</Btn><Btn $w={27}>Ø R</Btn></BtnRow>
        <BtnRow $mt={3}><Pick label="Channel mode" value="Stereo" w={57} /></BtnRow>
        <KnobRow $mt={6}><BigKnob w={57} label="Width" value="100 %" v={0.5} from={0.5} mark="#0c0c0c" /></KnobRow>
        <BtnRow $mt={5}><Btn>Mono</Btn></BtnRow>
        <BtnRow $mt={9}><Btn>Bass Mono</Btn></BtnRow>
        <BtnRow $mt={3}>
          <ValueBox aria-label="Bass mono frequency" $w={41} defaultValue="120 Hz" />
          <HeadIcon aria-label="Bass mono audition">
            <svg width="9" height="9" viewBox="0 0 9 9" fill="none" stroke="#bdbdbd" strokeWidth="1.3"><path d="M1.5 6V4.5A3 3 0 0 1 7.5 4.5V6M2.5 5.5V8M6.5 5.5V8" /></svg>
          </HeadIcon>
        </BtnRow>
      </Stack>
      <Divider width="3" height="161" viewBox="0 0 3 161" fill="#1e1e1e">
        <rect width="1" height="73" /><rect y="87" width="1" height="74" /><path d="M0 77L3 80.5L0 84Z" />
      </Divider>
      <Stack $w={53}>
        <UtilLabel>Output</UtilLabel>
        <KnobRow $mt={7}><BigKnob w={53} label="Gain" value="0.00 dB" v={0.5} from={0.5} mark="#0c0c0c" /></KnobRow>
        <KnobRow $mt={9}><BigKnob w={53} label="Balance" value="50L" v={0} from={0.5} mark={c.cyan} /></KnobRow>
        <BtnRow $mt={10}><Btn $w={31}>Mute</Btn><Btn $w={19}>DC</Btn></BtnRow>
      </Stack>
    </UtilityRow>
  </Device>
);

const DropZone = styled.div`
  display: flex;
  align-items: center;
  justify-content: center;
  flex: 1;
  padding-bottom: 2px;
  background: ${c.surface};
`;

/* ---------- footer ---------- */

const Footer = styled.footer`
  display: flex;
  align-items: flex-start;
  height: 37px;
  flex: none;
  padding: 0 7px 0 8px;
  & > button { margin-top: 9px; }
`;
const StatusBox = styled.div<{ $w?: number; $bg?: string }>`
  ${(p) => (p.$w ? `flex: none; width: ${p.$w}px;` : "flex: 1;")}
  height: 22px;
  margin: 8px 0 0 8px;
  border: 3px solid ${c.panel};
  border-radius: 4px;
  background: ${(p) => p.$bg ?? c.surface};
`;
const ChainTab = styled.div`
  display: flex;
  align-items: center;
  gap: 3px;
  height: 30px;
  margin: 0 8px;
  padding: 9px 4px 1px;
  background: ${c.deep};
  border-radius: 0 0 4px 4px;
  font-weight: 700;
`;
const mini = [
  [0, 18, "#5a5a5a"], [18, 25, "#050505"], [44, 18, "#4a5558"], [64, 43, "#4c4c4c"], [109, 12, "#555"],
] as const;
const MiniChain = () => (
  <svg width="121" height="16" viewBox="0 0 121 16">
    {mini.map(([x, w, f]) => <rect key={x} x={x} width={w} height="16" fill={f} />)}
    <path d="M1 2.5H17M1 6.5H17M1 10.5H17M1 14.5H17M45 3.5H61M45 8.5H61M45 12.5H61M65 10.5H106M65 13.5H106M110 3.5H120M110 8.5H120M110 12.5H120" stroke="#2c2c2c" strokeDasharray="4 2" />
    <path d="M19 10.5H42M19 13.5H36" stroke="#146d80" strokeDasharray="2 2" />
    <path d="M66 3.5H76M90 3.5H101M92 13.5H98M37 13.5H41" stroke={c.orange} strokeDasharray="3 1" />
    <path d="M66 5H80V10H66ZM86 5H104V10H86Z" fill="#080808" />
  </svg>
);

/* ---------- toolbar glyphs ---------- */

const Metro = ({ rev }: { rev?: boolean }) => (
  <svg width="11" height="9" viewBox="0 0 11 9" fill={c.text}>
    {(rev ? [[0, 1], [3, 1], [6, 1], [8, 3]] : [[0, 3], [4, 1], [7, 1], [10, 1]]).map(([x, w]) => <rect key={x} x={x} width={w} height="9" />)}
  </svg>
);
const Glyph = ({ d, color = c.text, w = 13, h = 11 }: { d: string; color?: string; w?: number; h?: number }) => (
  <svg width={w} height={h} viewBox={`0 0 ${w} ${h}`} fill="none" stroke={color} strokeWidth="1.2"><path d={d} /></svg>
);

const Transport = styled.button`
  display: flex;
  align-items: center;
  justify-content: center;
  width: 23px;
  height: 17px;
  background: none;
`;

export default function App() {
  return (
    <Window>
      <Global />
      <TitleBar>
        <AppBadge>Live</AppBadge>
        <TitleText>{"Under A Starry Sky*  [Under A Starry Sky] - Ableton Live 11 Suite"}</TitleText>
        <WindowButtons>
          <ChromeButton aria-label="Minimize"><Glyph d="M1 6.5H11" color="#fff" w={12} h={12} /></ChromeButton>
          <ChromeButton aria-label="Restore"><Glyph d="M1.5 3.5H8.5V10.5H1.5ZM3.5 3.5V1.5H10.5V8.5H8.5" color="#fff" w={12} h={12} /></ChromeButton>
          <ChromeButton aria-label="Close"><Glyph d="M1 1L11 11M11 1L1 11" color="#fff" w={12} h={12} /></ChromeButton>
        </WindowButtons>
      </TitleBar>
      <MenuBar>
        {["File", "Edit", "Create", "View", "Options", "Help"].map((m) => <MenuItem key={m} href="#">{m}</MenuItem>)}
      </MenuBar>
      <ControlBar>
        <Cluster>
          <BarButton $w={26}>Tap</BarButton>
          <BarInput aria-label="Tempo" $w={42} defaultValue="90.00" />
          <BarButton $w={17} aria-label="Nudge down"><Metro /></BarButton>
          <BarButton $w={17} aria-label="Nudge up"><Metro rev /></BarButton>
          <BarInput aria-label="Time signature" $w={42} defaultValue="4  /  4" />
          <BarButton $w={40} aria-label="Metronome">
            <svg width="17" height="8" viewBox="0 0 17 8"><circle cx="4" cy="4" r="3" fill="none" stroke={c.text} /><circle cx="13" cy="4" r="3.5" fill={c.text} /></svg>
            <svg width="14" height="3" viewBox="0 0 14 3"><path d="M8 0H13L10.5 3Z" fill={c.text} /></svg>
          </BarButton>
          <BarPickWrap>
            <BarPick aria-label="Quantization" $w={45} defaultValue="1 Bar"><option>1 Bar</option></BarPick>
            <SmallCaret />
          </BarPickWrap>
        </Cluster>
        <Spacer $grow={414} />
        <Cluster>
          <BarButton $w={21} $bg={c.orange} aria-label="Follow">
            <svg width="13" height="9" viewBox="0 0 13 9"><path d="M0 4.5H4" stroke="#000" /><path d="M4 0.5V8.5L8 4.5Z" /><path d="M8 4.5H13" stroke="#000" strokeDasharray="1.5 1" /></svg>
          </BarButton>
          <BarInput aria-label="Position" $w={82} $align="right" defaultValue="49 .   1 .   1" />
        </Cluster>
        <Spacer $grow={15} />
        <Cluster $gap={0}>
          <Transport aria-label="Play"><svg width="12" height="14" viewBox="0 0 12 14"><path d="M0 0V14L12 7Z" fill="#c8c8c8" /></svg></Transport>
          <Transport aria-label="Stop"><svg width="13" height="13"><rect width="13" height="13" fill="#c8c8c8" /></svg></Transport>
          <Transport aria-label="Record"><svg width="14" height="14"><circle cx="7" cy="7" r="6.5" fill="#d8d8d8" /></svg></Transport>
        </Cluster>
        <Spacer $grow={15} />
        <Cluster>
          <BarButton $w={17} aria-label="MIDI overdub"><Glyph d="M5.5 1V10M1 5.5H10" w={11} /></BarButton>
          <BarButton $w={17} aria-label="Automation arm"><svg width="12" height="12" viewBox="0 0 12 12" fill="none" stroke={c.text}><circle cx="2.5" cy="9.5" r="1.8" /><circle cx="9.5" cy="2.5" r="1.8" /><path d="M2.5 7.5C3 5.5 4 6 6 6S9 6 9.5 4.5" /></svg></BarButton>
          <BarButton $w={17} aria-label="Re-enable automation"><Glyph d="M1.5 5.5H10M5 2.5L2 5.5L5 8.5" w={11} color="#6a6a6a" /></BarButton>
          <BarButton $w={17} aria-label="Capture MIDI"><Glyph d="M1 3.5V1.5H3.5M7.5 1.5H10V3.5M10 7.5V9.5H7.5M3.5 9.5H1V7.5" w={11} color="#6a6a6a" /></BarButton>
          <BarButton $w={17} aria-label="Session record"><svg width="10" height="10"><circle cx="5" cy="5" r="4" fill="none" stroke={c.text} strokeWidth="1.3" /></svg></BarButton>
        </Cluster>
        <Spacer $grow={23} />
        <Cluster>
          <BarInput aria-label="Loop start" $w={82} $align="right" defaultValue="1 .   1 .   1" />
          <BarButton $w={21} aria-label="Punch in"><Glyph d="M0 2H3L9 9H13" /></BarButton>
          <BarButton $w={21} aria-label="Loop"><Glyph d="M4.5 9.5H2L1 8.5V2L2 1H11L12 2V8.5L11 9.5H7M9 7.5L7 9.5L9 11" /></BarButton>
          <BarButton $w={21} aria-label="Punch out"><Glyph d="M0 9H3L9 2H13" /></BarButton>
          <BarInput aria-label="Loop length" $w={82} $align="right" defaultValue="48 .   0 .   0" />
        </Cluster>
        <Spacer $grow={487} />
        <Cluster>
          <BarButton $w={17} aria-label="Draw mode"><svg width="11" height="11" viewBox="0 0 11 11"><path d="M1 8L2 5L7 0L10 2.5L4.5 7.5Z" fill={c.text} /><path d="M0 10.5H11" stroke={c.text} /></svg></BarButton>
          <BarButton $w={17} aria-label="Computer keyboard"><svg width="11" height="11" viewBox="0 0 11 11"><rect x="0.5" y="0.5" width="10" height="10" fill="none" stroke={c.text} /><path d="M3.5 0V7M7.5 0V7" stroke={c.text} strokeWidth="2" /><path d="M3.5 7V11M7.5 7V11" stroke={c.text} /></svg></BarButton>
          <BarButton $w={26}>Key</BarButton>
          <IoLamps><i /><i /></IoLamps>
          <BarButton $w={28}>MIDI</BarButton>
          <BarPickWrap>
            <BarPick aria-label="CPU load" $w={58} $pad={15} defaultValue="1 %"><option>1 %</option></BarPick>
            <SmallCaret />
          </BarPickWrap>
          <BarButton $w={30} aria-label="Disk overload" />
          <IoLamps><i /><i /></IoLamps>
        </Cluster>
      </ControlBar>

      <Main>
        <Browser>
          <Corner><RoundButton aria-label="Show browser"><PlayMark /></RoundButton></Corner>
          <SearchArea><Search aria-label="Search" placeholder="Search (Ctrl + F)" /></SearchArea>
          <BrowserLists>
            <List>
              <ListHead $first>Collections</ListHead>
              <ListItem href="#"><BrowserIcon name="Favorites" />Favorites</ListItem>
              <ListHead>Categories</ListHead>
              {categories.map((n) => <ListItem key={n} href="#" $on={n === "Sounds"}><BrowserIcon name={n} />{n}</ListItem>)}
              <ListHead>Places</ListHead>
              {places.map((n) => <ListItem key={n} href="#" $link={n.startsWith("Add")}><BrowserIcon name={n} />{n}</ListItem>)}
            </List>
            <List>
              <NameHead>Name<svg width="7" height="7" viewBox="0 0 7 7"><path d="M0 7H7L3.5 0Z" fill="#555" /></svg></NameHead>
              {folders.map((f) => (
                <FolderRow key={f} href="#"><svg width="6" height="7" viewBox="0 0 6 7"><path d="M0 0V7L6 3.5Z" fill="#8a8a8a" /></svg>{f}</FolderRow>
              ))}
            </List>
          </BrowserLists>
          <Corner $foot><RoundButton aria-label="Groove pool"><Waves /></RoundButton></Corner>
          <InfoArea>
            <div>
              <RoundButton $s={13} $bg="#2b7fdd" aria-label="Preview">
                <svg width="9" height="9" viewBox="0 0 9 9" fill="none" stroke="#0b1c30" strokeWidth="1.3"><path d="M1.5 6V4.5A3 3 0 0 1 7.5 4.5V6M4.5 3.5V9" /></svg>
              </RoundButton>
            </div>
          </InfoArea>
        </Browser>

        <Arrangement>
          <ArrBody>
            <OverviewRow>
              <OverviewBox><OverviewSvg /></OverviewBox>
              <OverviewRest />
              <Cluster $gap={3}><Btn $w={19}>H</Btn><Btn $w={19}>W</Btn></Cluster>
            </OverviewRow>
            <RulerRow>
              <Ruler>
                <BarNumbers>
                  {bars(24).map((i) => <BarNumber key={i}>{i * 2 + 1}</BarNumber>)}
                </BarNumbers>
                <LoopBar>
                  <Glyph d="M1 0L8 4.5L1 9" color="#9c9c9c" w={9} h={9} />
                  <Glyph d="M8 0L1 4.5L8 9" color="#9c9c9c" w={9} h={9} />
                </LoopBar>
                <ScrubStrip>
                  <ScrubLines shapeRendering="crispEdges">
                    {bars(6).map((i) => <rect key={"s" + i} x={`${(i * 800) / 48}%`} width={`${400 / 48}%`} height="13" fill="rgba(0,0,0,.1)" />)}
                    {bars(48).map((i) => <rect key={i} x={`${(i * 100) / 48}%`} width="1" height="13" fill="rgba(0,0,0,.35)" />)}
                  </ScrubLines>
                </ScrubStrip>
                <CueLine shapeRendering="crispEdges" fill="#8fd6e0">
                  <rect y="3" width="1" height="4" />
                  <rect y="6" width="99.4%" height="1" />
                  <rect x="99.4%" y="3" width="4" height="1" /><rect x="99.4%" y="4" width="3" height="1" /><rect x="99.4%" y="5" width="2" height="1" />
                </CueLine>
              </Ruler>
              <SetTools>
                <SetButton>Set</SetButton>
                <Cluster $gap={4}>
                  <RoundButton $s={13} $bg="#464646" aria-label="Previous locator"><Glyph d="M2 4.5H8M5 2L2 4.5L5 7" w={9} h={9} color="#888" /></RoundButton>
                  <RoundButton $s={13} $bg="#464646" aria-label="Next locator"><Glyph d="M1 4.5H7M4 2L7 4.5L4 7" w={9} h={9} /></RoundButton>
                  <Spacer $grow={0} /><Spacer $grow={0} />
                  <Btn $w={23} aria-label="Automation mode"><svg width="9" height="8" viewBox="0 0 9 8"><path d="M2 6.5L7 1.5" stroke={c.text} /><circle cx="1.8" cy="6.5" r="1.5" fill={c.text} /><circle cx="7.2" cy="1.5" r="1.5" fill={c.text} /></svg></Btn>
                  <Btn $w={23} aria-label="Lock envelopes"><svg width="8" height="8" viewBox="0 0 8 8"><rect y="3.5" width="8" height="4.5" fill={c.text} /><path d="M2 4V2.5A2 2 0 0 1 6 2.5V4" fill="none" stroke={c.text} /></svg></Btn>
                </Cluster>
              </SetTools>
            </RulerRow>
            <TrackList>
              {tracks.map((t) => <TrackRow key={t.n} t={t} />)}
            </TrackList>
            <Returns>
              <ReturnRow id="A" name="A Reverb" color="#8bc5ff" />
              <ReturnRow id="B" name="B Delay" color="#10a4ee" />
              <RowShell $h={17}>
                <Lane><Grid /><LaneTail /><GridLabel>1/1</GridLabel></Lane>
                <TrackHead $color="#92a7ff"><Fold closed />{"\u00a0"}Master</TrackHead>
                <IoCol><Pick label="Master output" value="1/2" indent={10} /></IoCol>
                <MixCol>
                  <MixRows>
                    <Cluster $gap={4}>
                      <ValueBox aria-label="Master volume" $w={46} $fill={84} defaultValue="0" />
                      <ValueBox aria-label="Cue volume" $w={46} $fill={84} $color="#2b7fdd" defaultValue="0" />
                    </Cluster>
                  </MixRows>
                  <Meter />
                </MixCol>
              </RowShell>
            </Returns>
            <TimeRow>
              {bars(13).map((i) => {
                const s = i * 10;
                return <TimeMark key={i}>{Math.floor(s / 60)}:{String(s % 60).padStart(2, "0")}</TimeMark>;
              })}
            </TimeRow>
          </ArrBody>
          <ArrSide>
            <ModeNotch>
              <RoundButton aria-label="Arrangement view"><svg width="11" height="11" fill={c.orange}><rect width="11" height="2" /><rect y="3" width="11" height="2" /><rect y="6" width="11" height="2" /><rect y="9" width="11" height="2" /></svg></RoundButton>
              <RoundButton aria-label="Session view"><svg width="11" height="11" fill="#4a4a4a"><rect width="2" height="11" /><rect x="3" width="2" height="11" /><rect x="6" width="2" height="11" /><rect x="9" width="2" height="11" /></svg></RoundButton>
            </ModeNotch>
            <ScrollThumb />
            <SideDots>
              <DotButton>I·O</DotButton>
              <DotButton>R</DotButton>
              <DotButton>M</DotButton>
              <DotButton $off>D</DotButton>
            </SideDots>
          </ArrSide>
        </Arrangement>
      </Main>

      <Rack>
        <RackGrip />
        <OperatorDevice />
        <RackMeter />
        <ReverbDevice />
        <RackMeter />
        <UtilityDevice />
        <RackMeter />
        <DropZone>Drop an Instrument or Sample Here</DropZone>
      </Rack>

      <Footer>
        <RoundButton aria-label="Show info view"><PlayMark /></RoundButton>
        <StatusBox />
        <StatusBox $w={206} $bg="#476b75">
          <svg width="200" height="16" shapeRendering="crispEdges" fill="#1f3238">
            <rect x="14" y="1" width="186" height="1" /><rect x="9" y="4" width="191" height="1" /><rect x="4" y="8" width="196" height="1" /><rect y="14" width="200" height="1" />
          </svg>
        </StatusBox>
        <ChainTab>5-Portamento Female Pure<MiniChain /></ChainTab>
        <RoundButton aria-label="Show detail view"><svg width="12" height="12" viewBox="0 0 12 12"><path d="M0.5 11H11.5L6 0Z" fill="#6a6a6a" /></svg></RoundButton>
      </Footer>
    </Window>
  );
}
